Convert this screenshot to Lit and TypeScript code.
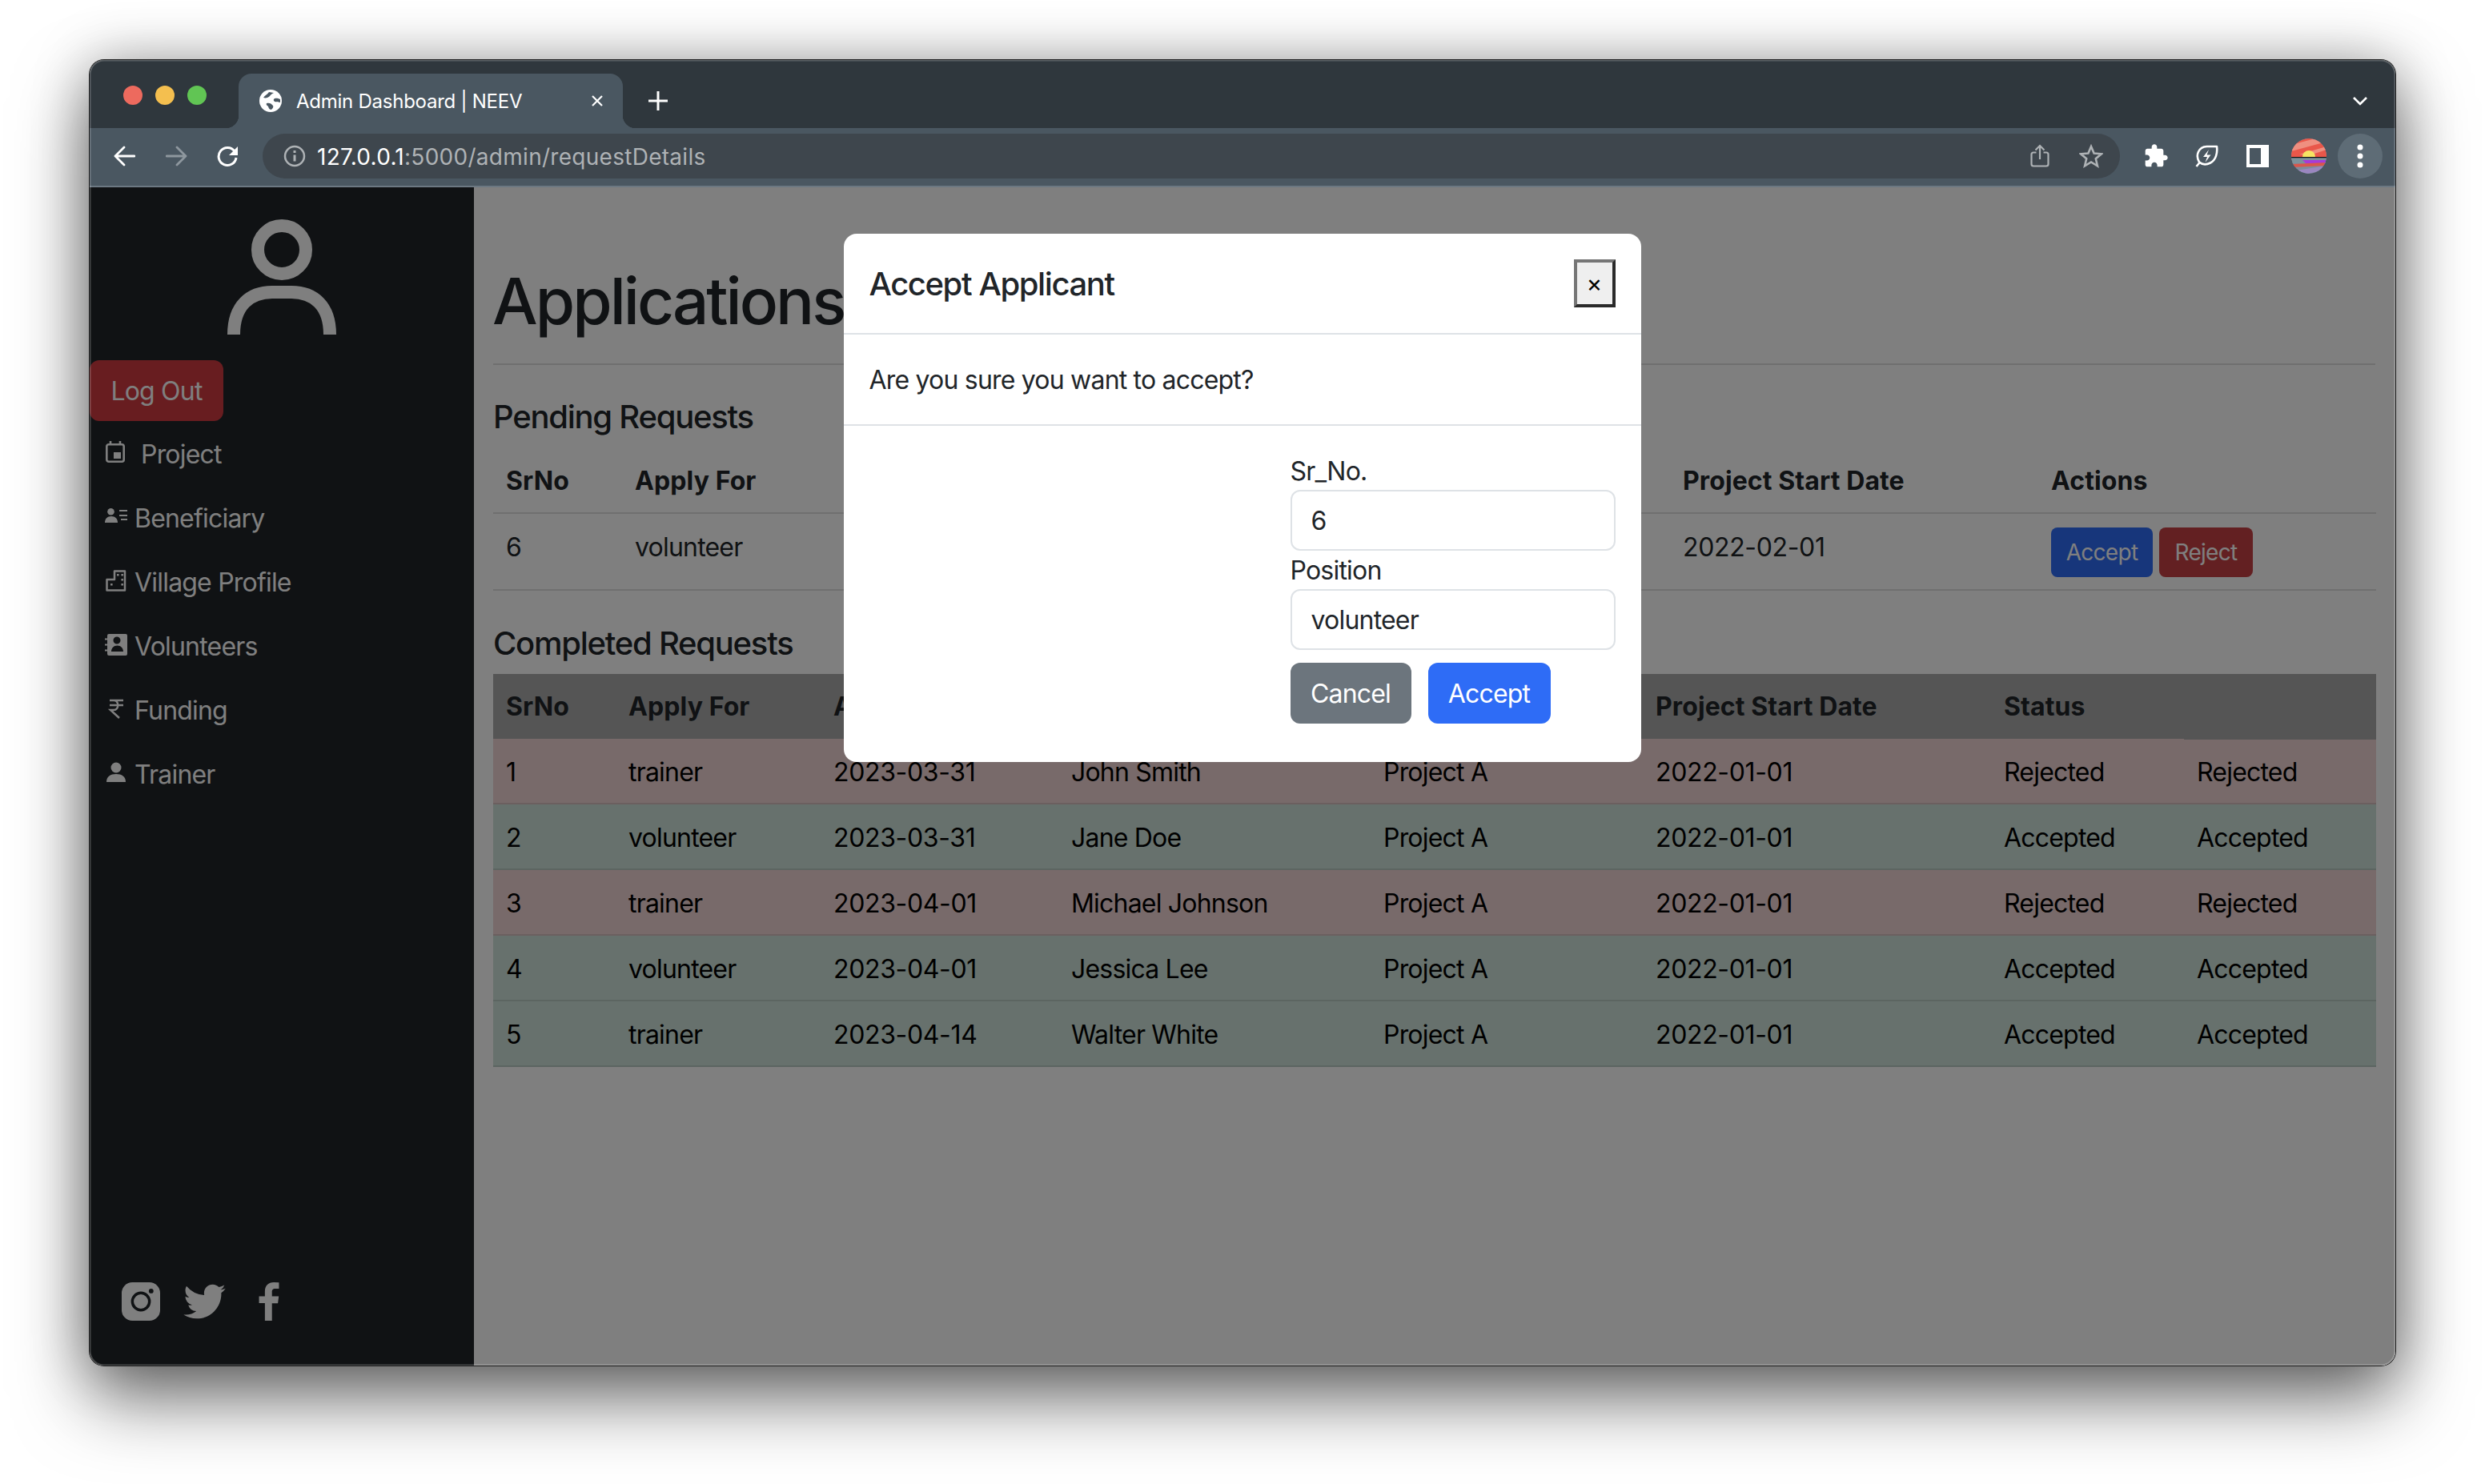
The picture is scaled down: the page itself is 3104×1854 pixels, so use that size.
import { LitElement, html, css, svg } from 'lit';
import { customElement } from 'lit/decorators.js';

const completed = [
  ['1', 'trainer', '2023-03-31', 'John Smith', 'Project A', '2022-01-01', 'Rejected'],
  ['2', 'volunteer', '2023-03-31', 'Jane Doe', 'Project A', '2022-01-01', 'Accepted'],
  ['3', 'trainer', '2023-04-01', 'Michael Johnson', 'Project A', '2022-01-01', 'Rejected'],
  ['4', 'volunteer', '2023-04-01', 'Jessica Lee', 'Project A', '2022-01-01', 'Accepted'],
  ['5', 'trainer', '2023-04-14', 'Walter White', 'Project A', '2022-01-01', 'Accepted'],
];

const icon = (w: number, h: number, box: string, body: unknown) =>
  html`<svg width=${w} height=${h} viewBox=${box}>${body}</svg>`;

const navIcons = {
  project: svg`<rect x="2.300" y="4.300" width="21.400" height="21.400" rx="2.500" fill="none" stroke="#fff" stroke-width="2.600"/><path d="M7 0v5M19 0v5" stroke="#fff" stroke-width="2.600"/><rect x="11" y="14" width="9" height="8" fill="#fff"/>`,
  beneficiary: svg`<circle cx="7.500" cy="4.300" r="4.300" fill="#fff"/><path d="M0 18c0-5 3-8 8-8s8 3 8 8z" fill="#fff"/><path d="M18 3h10M18 9h10M20 14h8" stroke="#fff" stroke-width="2"/>`,
  village: svg`<path d="M12 13V2.500h13V26.500H2.500V13z" fill="none" stroke="#fff" stroke-width="2.500" stroke-linejoin="round"/><path d="M15 6h2.600v2.600H15zM20.400 6H23v2.600h-2.600zM20.400 12H23v2.600h-2.600zM20.400 18H23v2.600h-2.600zM7 18h2.600v2.600H7z" fill="#fff"/>`,
  volunteers: svg`<path fill-rule="evenodd" fill="#fff" d="M5 1h21a2 2 0 0 1 2 2v23a2 2 0 0 1-2 2H5a2 2 0 0 1-2-2v-3.500H0v-2h3v-5H0v-2h3v-5H0v-2h3V3a2 2 0 0 1 2-2zm10 3.500a4.500 4.500 0 1 0 0 9 4.500 4.500 0 0 0 0-9zM8 23h15c0-4-3-7.500-7.500-7.500S8 19 8 23z"/>`,
  funding: svg`<path d="M6 4h17M6 10h17M6 4h5c7 0 7 12 0 12H7l11 10" fill="none" stroke="#fff" stroke-width="2.500"/>`,
  trainer: svg`<circle cx="14" cy="8" r="6.500" fill="#fff"/><path d="M2 26c0-7 5-10 12-10s12 3 12 10z" fill="#fff"/>`,
};

@customElement('app-root')
export class AppRoot extends LitElement {
  static styles = css`
    :host {
      display: block;
      box-sizing: border-box;
      width: 3104px;
      height: 1854px;
      padding: 75px 112px 148px 112px;
      background: #fff;
      font-family: Inter, 'Liberation Sans', sans-serif;
      font-size: 32px;
      letter-spacing: -0.8px;
      color: #212529;
    }
    * { box-sizing: border-box; }
    .window {
      position: relative;
      height: 100%;
      display: flex;
      flex-direction: column;
      overflow: hidden;
      border-radius: 18px;
      background: #808080;
    }
    .frame {
      height: 100%;
      border-radius: 18px;
      box-shadow: 0 0 0 1px #1c1c1c, 0 42px 90px rgba(0, 0, 0, 0.55), 0 0 70px rgba(0, 0, 0, 0.28);
    }
    .window::after {
      content: '';
      position: absolute;
      inset: 0;
      border-radius: 18px;
      box-shadow: inset 0 0 0 1.5px rgba(255, 255, 255, 0.22);
      pointer-events: none;
    }

    .strip {
      height: 85px;
      flex: none;
      display: flex;
      align-items: flex-end;
      padding-left: 42px;
      background: #2f373d;
    }
    .lights { display: flex; gap: 16px; align-self: flex-start; margin-top: 32px; width: 144px; }
    .lights i { width: 24px; height: 24px; border-radius: 50%; }
    .red { background: #ed6a5e; }
    .yellow { background: #f4bf4f; }
    .green { background: #61c554; }
    .tab {
      position: relative;
      width: 480px;
      height: 68px;
      display: flex;
      align-items: center;
      padding: 0 24px 0 26px;
      border-radius: 16px 16px 0 0;
      background: #4a5761;
      color: #fff;
      font-size: 24px;
      letter-spacing: -0.25px;
    }
    .tab::before, .tab::after {
      content: '';
      position: absolute;
      bottom: 0;
      width: 16px;
      height: 16px;
    }
    .tab::before { left: -16px; background: radial-gradient(circle at 0 0, transparent 16px, #4a5761 16.500px); }
    .tab::after { right: -16px; background: radial-gradient(circle at 100% 0, transparent 16px, #4a5761 16.500px); }
    .tab .title { margin-left: 18px; flex: 1; white-space: nowrap; }
    .plus { display: flex; margin: 0 0 21px 31px; }
    .chev { display: flex; margin: 0 34px 28px auto; }

    .toolbar {
      height: 74px;
      flex: none;
      display: flex;
      align-items: center;
      padding: 0 16px 2px 29px;
      background: #4a5761;
      border-bottom: 2px solid #6c7882;
    }
    .nav-btns { display: flex; align-items: center; gap: 38px; width: 187px; flex: none; }
    .nav-btns svg:last-child { margin-left: -3px; }
    .url {
      width: 2320px;
      height: 56px;
      flex: none;
      display: flex;
      align-items: center;
      padding: 0 21px 0 26px;
      border-radius: 28px;
      background: #3e464d;
      font-size: 28px;
      letter-spacing: 0.28px;
      color: #aeb2b5;
    }
    .url b { font-weight: 400; color: #fff; }
    .url .addr { margin-left: 14px; flex: 1; padding-top: 1px; }
    .url .star { display: flex; margin-left: 37px; }
    .tools { display: flex; align-items: center; gap: 33px; margin-left: 29px; }
    .tools .panel { display: flex; margin-left: 1px; }
    .tools .av { display: flex; margin-left: -5px; }
    .menu {
      width: 56px;
      height: 56px;
      margin-left: -19px;
      display: flex;
      align-items: center;
      justify-content: center;
      border-radius: 50%;
      background: #5e6c76;
    }

    .content { position: relative; flex: 1; display: flex; min-height: 0; background: #fff; }
    .side {
      width: 480px;
      flex: none;
      display: flex;
      flex-direction: column;
      background: #212529;
      color: #fff;
    }
    .avatar { display: block; margin: 40px auto 0; }
    .logout {
      width: 167px;
      height: 76px;
      margin-top: 32px;
      border: 0;
      border-radius: 12px;
      background: #d03a40;
      color: #fff;
      font: inherit;
      letter-spacing: inherit;
    }
    .links { margin-top: 1px; }
    .link { height: 80px; display: flex; align-items: center; gap: 9px; padding-left: 19px; }
    .link svg { margin-bottom: 5px; }
    .link.wide { gap: 17px; }
    .social { margin-top: auto; display: flex; gap: 16px; padding: 0 0 48px 32px; }

    main { flex: 1; min-width: 0; padding: 94px 25px 0 23px; }
    h1 { margin: 0; height: 96px; font-size: 80px; line-height: 96px; font-weight: 500; letter-spacing: -3px; white-space: nowrap; }
    hr { margin: 30px 0 0 1px; height: 2px; border: 0; background: #dedede; }
    h3 { margin: 0 0 0 1px; height: 48px; font-size: 40px; line-height: 48px; font-weight: 500; letter-spacing: -1.250px; }
    .h-pending { margin-top: 41px; }
    .h-done { margin-top: 42px; }
    table { width: calc(100% - 1px); margin-left: 1px; table-layout: fixed; border-collapse: separate; border-spacing: 0; }
    th { padding: 0 16px; text-align: left; font-weight: 700; letter-spacing: 0.1px; white-space: nowrap; }
    td { padding: 0 16px; white-space: nowrap; }
    .pending { margin-top: 16px; }
    .pending th { height: 81px; border-bottom: 2px solid #dedede; }
    .pending td { height: 96px; border-bottom: 2px solid #dedede; padding-bottom: 12px; }
    .pending td.actions { padding-bottom: 0; padding-top: 2px; }
    .num { letter-spacing: -0.35px; }
    .act {
      height: 62px;
      padding: 0 18px;
      border: 0;
      border-radius: 8px;
      color: #fff;
      font: inherit;
      font-size: 28px;
      letter-spacing: -0.7px;
    }
    .act.ok { width: 127px; padding: 0; background: #2e6cf6; }
    .act.no { width: 117px; padding: 0; margin-left: 8px; background: #c64145; }
    .done { margin-top: 14px; }
    .done th { height: 81px; background: #aaa; }
    .done th:last-child { position: relative; box-shadow: 0 1px 0 #aaa; }
    .done td { height: 82px; border-bottom: 2px solid rgba(0, 0, 0, 0.1); color: #000; padding-top: 2px; }
    .rejected td { background: #f0d4d5; }
    .accepted td { background: #cee2da; }
    .c1 { width: 153px; } .c2 { width: 256px; } .c3 { width: 297px; } .c4 { width: 390px; }
    .c5 { width: 340px; } .c6 { width: 435px; } .c7 { width: 241px; } .c8 { width: 240px; }
    .p1 { width: 161px; } .p2 { width: 292px; } .p3 { width: 290px; } .p4 { width: 380px; }
    .p5 { width: 347px; } .p6 { width: 460px; } .p7 { width: 422px; }

    .backdrop {
      position: absolute;
      inset: 0;
      display: flex;
      justify-content: center;
      align-items: flex-start;
      padding-top: 58px;
      background: rgba(0, 0, 0, 0.5);
    }
    .dialog { width: 996px; margin-right: 1px; border-radius: 16px; background: #fff; }
    .d-head {
      height: 126px;
      display: flex;
      align-items: center;
      justify-content: space-between;
      padding: 0 32px;
      border-bottom: 2px solid #dee2e6;
    }
    .d-head h2 { margin: 2px 0 0; font-size: 40px; line-height: 48px; font-weight: 500; letter-spacing: -1.400px; }
    .close {
      width: 52px;
      height: 60px;
      padding: 0;
      border-width: 4px;
      border-style: solid;
      border-color: #767676 #2a2a2a #2a2a2a #767676;
      background: #efefef;
      color: #000;
      font: inherit;
      font-size: 30px;
      line-height: 1;
    }
    .d-body { height: 114px; padding: 33px 32px 0; line-height: 48px; border-bottom: 2px solid #dee2e6; }
    .d-form { display: flex; justify-content: flex-end; padding: 32px 32px 48px; }
    form { width: 406px; }
    label { display: block; height: 48px; line-height: 50px; }
    input {
      display: block;
      width: 100%;
      height: 76px;
      padding: 0 24px;
      border: 2px solid #dee2e6;
      border-radius: 12px;
      color: #212529;
      font: inherit;
      letter-spacing: inherit;
      outline: none;
    }
    .f-btns { display: flex; gap: 21px; margin-top: 16px; }
    .btn { height: 76px; border: 0; border-radius: 12px; color: #fff; font: inherit; letter-spacing: inherit; }
    .btn.grey { width: 151px; background: #6c757d; }
    .btn.blue { width: 153px; background: #2e6cf6; }
  `;

  private renderChrome() {
    return html`
      <div class="strip">
        <div class="lights"><i class="red"></i><i class="yellow"></i><i class="green"></i></div>
        <div class="tab">
          ${icon(28, 28, '0 0 28 28', svg`<circle cx="14" cy="14" r="14" fill="#fff"/><path d="M12 3C10 6 7 7 5 10c3 1 6 0 8-2 1-2 3-3 5-4zM26 12c-3-1-6-2-8 0-1 2 2 4 4 3l4 1zM9 17c3-1 6 0 8 3 1 2-1 4-2 5-2 0-3-1-4-4-1-1-3-2-2-4z" fill="#4a5761"/>`)}
          <span class="title">Admin Dashboard | NEEV</span>
          ${icon(16, 16, '0 0 16 16', svg`<path d="M2 2l12 12M14 2L2 14" stroke="#fff" stroke-width="2.200"/>`)}
        </div>
        <span class="plus">${icon(26, 26, '0 0 26 26', svg`<path d="M13 1v24M1 13h24" stroke="#fff" stroke-width="3"/>`)}</span>
        <span class="chev">${icon(20, 12, '0 0 20 12', svg`<path d="M2 2l8 8 8-8" fill="none" stroke="#fff" stroke-width="2.600"/>`)}</span>
      </div>
      <div class="toolbar">
        <div class="nav-btns">
          ${icon(28, 28, '0 0 28 28', svg`<path d="M27 14H3M14 3L3 14l11 11" fill="none" stroke="#fff" stroke-width="2.800" stroke-linecap="round" stroke-linejoin="round"/>`)}
          ${icon(28, 28, '0 0 28 28', svg`<path d="M1 14h24M14 3l11 11-11 11" fill="none" stroke="#8e979e" stroke-width="2.800" stroke-linecap="round" stroke-linejoin="round"/>`)}
          ${icon(28, 28, '0 0 28 28', svg`<path d="M23 8a11 11 0 1 0 2 8" fill="none" stroke="#fff" stroke-width="3"/><path d="M27 2v11H16z" fill="#fff"/>`)}
        </div>
        <div class="url">
          ${icon(28, 28, '0 0 28 28', svg`<circle cx="14" cy="14" r="12" fill="none" stroke="#aeb2b5" stroke-width="2.500"/><path d="M14 12.500v8M14 7v3" stroke="#aeb2b5" stroke-width="3"/>`)}
          <span class="addr"><b>127.0.0.1</b>:5000/admin/requestDetails</span>
          ${icon(24, 30, '0 0 24 30', svg`<path d="M7.500 10.500H4a2.500 2.500 0 0 0-2.500 2.500v12A2.500 2.500 0 0 0 4 27.500h16a2.500 2.500 0 0 0 2.500-2.500V13a2.500 2.500 0 0 0-2.500-2.500h-3.500M12 19V2M6.500 7.500L12 2l5.500 5.500" fill="none" stroke="#aeb2b5" stroke-width="2.200"/>`)}
          <span class="star">${icon(30, 30, '0 0 30 30', svg`<path d="M15 3l3.600 8.500 9.200.800-7 6 2.100 9-7.900-4.800-7.900 4.800 2.100-9-7-6 9.200-.8z" fill="none" stroke="#aeb2b5" stroke-width="2.600"/>`)}</span>
        </div>
        <div class="tools">
          ${icon(32, 32, '0 0 24 24', svg`<path fill="#fff" d="M20.500 11H19V7c0-1.100-.9-2-2-2h-4V3.500C13 2.120 11.880 1 10.500 1S8 2.120 8 3.500V5H4c-1.100 0-1.990.9-1.990 2v3.800H3.500c1.490 0 2.700 1.210 2.700 2.700s-1.210 2.700-2.700 2.700H2V20c0 1.100.9 2 2 2h3.800v-1.500c0-1.490 1.210-2.700 2.700-2.700 1.490 0 2.700 1.210 2.700 2.700V22H17c1.100 0 2-.9 2-2v-4h1.500c1.380 0 2.500-1.120 2.500-2.500S21.880 11 20.500 11z"/>`)}
          ${icon(30, 30, '0 0 30 30', svg`<path d="M1.500 28L6 22.500M5 22.500C0 14 4 3.500 14.500 3H27c1 8-1 17-8 20.500-5 2.500-10 2.500-14-1z" fill="none" stroke="#fff" stroke-width="2.600" stroke-linejoin="round"/><path d="M17 7l-7 9h5l-2.500 7 7-9.500h-5z" fill="#fff"/>`)}
          <span class="panel">${icon(28, 28, '0 0 28 28', svg`<path fill="#fff" fill-rule="evenodd" d="M0 0h28v28H0zM4 4v20h14V4z"/>`)}</span>
          <span class="av">${icon(44, 44, '0 0 44 44', svg`
            <defs><clipPath id="av"><circle cx="22" cy="22" r="22"/></clipPath></defs>
            <g clip-path="url(#av)">
              <rect width="44" height="44" fill="#7f8b9b"/>
              <rect width="44" height="23" fill="#e9574a"/>
              <path d="M0 8L30 0h14v4L0 16zM10 20l34-10v4L26 20z" fill="#ef8f80"/>
              <path d="M30 23a8 8 0 0 1 16 0z" transform="translate(-16 0)" fill="#f6e463"/>
              <rect y="23" width="44" height="1.500" fill="#111"/>
              <rect y="24.500" width="44" height="7" fill="#7c929b"/>
              <path d="M14 27h30v4H18z" fill="#a63bd8"/>
              <path d="M0 32l44-2v4L0 36z" fill="#d9564c"/>
              <path d="M6 40l38-6v5L20 44z" fill="#9a86c0"/>
            </g>`)}</span>
          <div class="menu">${icon(8, 30, '0 0 8 30', svg`<circle cx="4" cy="4" r="3.500" fill="#fff"/><circle cx="4" cy="15" r="3.500" fill="#fff"/><circle cx="4" cy="26" r="3.500" fill="#fff"/>`)}</div>
        </div>
      </div>
    `;
  }

  private renderSidebar() {
    return html`
      <aside class="side">
        <svg class="avatar" width="136" height="144" viewBox="0 0 136 144">
          <circle cx="68" cy="38" r="30" fill="none" stroke="#fff" stroke-width="16"/>
          <path d="M8 144C8 108 28 91 56 91H80C108 91 128 108 128 144" fill="none" stroke="#fff" stroke-width="16"/>
        </svg>
        <button class="logout">Log Out</button>
        <div class="links">
          <div class="link wide">${icon(28, 28, '0 0 28 28', navIcons.project)}<span>Project</span></div>
          <div class="link">${icon(28, 28, '0 0 28 20', navIcons.beneficiary)}<span>Beneficiary</span></div>
          <div class="link">${icon(28, 28, '0 0 28 28', navIcons.village)}<span>Village Profile</span></div>
          <div class="link">${icon(28, 28, '0 0 28 28', navIcons.volunteers)}<span>Volunteers</span></div>
          <div class="link">${icon(28, 28, '0 0 28 28', navIcons.funding)}<span>Funding</span></div>
          <div class="link">${icon(28, 28, '0 0 28 28', navIcons.trainer)}<span>Trainer</span></div>
        </div>
        <div class="social">
          ${icon(64, 64, '0 0 24 24', svg`<rect x="3" y="3" width="18" height="18" rx="5" fill="#fff"/><circle cx="12" cy="12" r="4" fill="#fff" stroke="#212529" stroke-width="1.300"/><circle cx="16.800" cy="7.100" r="1.100" fill="#212529"/>`)}
          ${icon(64, 64, '0 0 24 24', svg`<path fill="#fff" d="M19.633 7.997c.013.175.013.349.013.523 0 5.325-4.053 11.461-11.460 11.461-2.282 0-4.402-.661-6.186-1.809.324.037.636.05.973.05a8.070 8.070 0 0 0 5.001-1.721 4.036 4.036 0 0 1-3.767-2.793c.249.037.499.062.761.062.361 0 .724-.05 1.061-.137a4.027 4.027 0 0 1-3.230-3.953v-.05c.537.299 1.160.486 1.820.511a4.022 4.022 0 0 1-1.796-3.354c0-.748.199-1.434.548-2.032a11.457 11.457 0 0 0 8.306 4.215c-.062-.3-.1-.611-.1-.923a4.026 4.026 0 0 1 4.028-4.028c1.160 0 2.207.486 2.943 1.272a7.957 7.957 0 0 0 2.556-.973 4.020 4.020 0 0 1-1.771 2.220 8.073 8.073 0 0 0 2.319-.624 8.645 8.645 0 0 1-2.019 2.083z"/>`)}
          ${icon(64, 64, '0 0 24 24', svg`<path fill="#fff" d="M13.397 20.997v-8.196h2.765l.411-3.209h-3.176V7.548c0-.926.258-1.560 1.587-1.560h1.684V3.127A22.336 22.336 0 0 0 14.201 3c-2.444 0-4.122 1.492-4.122 4.231v2.355H7.332v3.209h2.753v8.202h3.312z"/>`)}
        </div>
      </aside>
    `;
  }

  private renderTables() {
    return html`
      <main>
        <h1>Applications</h1>
        <hr />
        <h3 class="h-pending">Pending Requests</h3>
        <table class="pending">
          <colgroup>${[1, 2, 3, 4, 5, 6, 7].map((n) => html`<col class="p${n}" />`)}</colgroup>
          <thead>
            <tr><th>SrNo</th><th>Apply For</th><th>Applied On</th><th>Name</th><th>Project</th><th>Project Start Date</th><th>Actions</th></tr>
          </thead>
          <tbody>
            <tr>
              <td>6</td><td>volunteer</td><td class="num">2023-04-14</td><td>Skyler White</td><td>Project A</td><td class="num">2022-02-01</td>
              <td class="actions"><button class="act ok">Accept</button><button class="act no">Reject</button></td>
            </tr>
          </tbody>
        </table>
        <h3 class="h-done">Completed Requests</h3>
        <table class="done">
          <colgroup>${[1, 2, 3, 4, 5, 6, 7, 8].map((n) => html`<col class="c${n}" />`)}</colgroup>
          <thead>
            <tr><th>SrNo</th><th>Apply For</th><th>Applied On</th><th>Name</th><th>Project</th><th>Project Start Date</th><th>Status</th><th></th></tr>
          </thead>
          <tbody>
            ${completed.map((row) => html`
              <tr class=${row[6].toLowerCase()}>
                ${row.map((cell, i) => html`<td class=${i === 2 || i === 5 ? 'num' : ''}>${cell}</td>`)}
                <td>${row[6]}</td>
              </tr>`)}
          </tbody>
        </table>
      </main>
    `;
  }

  render() {
    return html`
      <div class="frame">
        <div class="window">
          ${this.renderChrome()}
          <div class="content">
            ${this.renderSidebar()}
            ${this.renderTables()}
            <div class="backdrop">
              <div class="dialog">
                <div class="d-head"><h2>Accept Applicant</h2><button class="close">×</button></div>
                <div class="d-body">Are you sure you want to accept?</div>
                <div class="d-form">
                  <form>
                    <label>Sr_No.</label>
                    <input value="6" readonly />
                    <label>Position</label>
                    <input value="volunteer" readonly />
                    <div class="f-btns">
                      <button class="btn grey" type="button">Cancel</button>
                      <button class="btn blue" type="button">Accept</button>
                    </div>
                  </form>
                </div>
              </div>
            </div>
          </div>
        </div>
      </div>
    `;
  }
}
